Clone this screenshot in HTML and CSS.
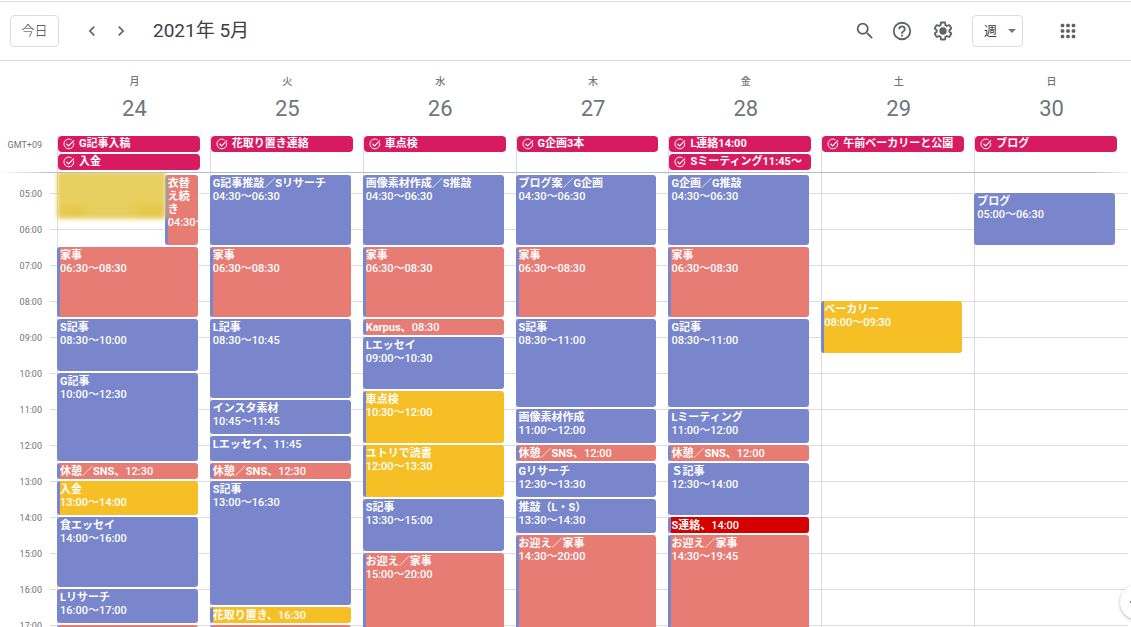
FILE: index.html
```html
<!DOCTYPE html>
<html lang="ja">
<head>
<meta charset="utf-8">
<meta name="viewport" content="width=device-width, initial-scale=1">
<title>2021年 5月</title>
<link rel="stylesheet" href="styles.css">
</head>
<body>
<svg class="sprite" aria-hidden="true">
  <symbol id="task" viewBox="0 0 24 24">
    <path d="M21.2 9.5A9.8 9.8 0 1 1 17 3.6" fill="none" stroke="currentColor" stroke-width="2"/>
    <path d="M7 11.5l4.2 4.2L22 4.6" fill="none" stroke="currentColor" stroke-width="2.2"/>
  </symbol>
</svg>

<header class="toolbar">
  <button class="today" type="button">今日</button>
  <div class="pager">
    <button class="icon-button" type="button" aria-label="前の週"><svg viewBox="0 0 24 24" class="chevron"><path d="M15.4 7.4 14 6l-6 6 6 6 1.4-1.4-4.6-4.6z"/></svg></button>
    <button class="icon-button" type="button" aria-label="次の週"><svg viewBox="0 0 24 24" class="chevron"><path d="M10 6 8.6 7.4l4.6 4.6-4.6 4.6L10 18l6-6z"/></svg></button>
  </div>
  <h1 class="period">2021年 5月</h1>
  <div class="tools">
    <div class="support">
      <button class="icon-button" type="button" aria-label="検索"><svg viewBox="0 0 24 24" class="icon"><path d="M15.5 14h-.79l-.28-.27A6.47 6.47 0 0 0 16 9.5 6.5 6.5 0 1 0 9.5 16c1.61 0 3.09-.59 4.23-1.57l.27.28v.79l5 4.99L20.49 19zm-6 0a4.5 4.5 0 1 1 0-9 4.5 4.5 0 0 1 0 9z"/></svg></button>
      <button class="icon-button" type="button" aria-label="ヘルプ"><svg viewBox="0 0 24 24" class="icon"><path d="M11 18h2v-2h-2zm1-16a10 10 0 1 0 0 20 10 10 0 0 0 0-20zm0 18a8 8 0 1 1 0-16 8 8 0 0 1 0 16zm0-14a4 4 0 0 0-4 4h2a2 2 0 1 1 4 0c0 2-3 1.750-3 5h2c0-2.250 3-2.500 3-5a4 4 0 0 0-4-4z"/></svg></button>
    </div>
    <button class="icon-button" type="button" aria-label="設定"><svg viewBox="0 0 24 24" class="icon"><path d="M13.85 22.250h-3.700c-.74 0-1.360-.54-1.450-1.270l-.27-1.890c-.27-.14-.53-.29-.79-.46l-1.800.72c-.7.26-1.470-.03-1.810-.65L2.200 15.530c-.35-.66-.2-1.440.36-1.880l1.530-1.190c-.01-.15-.02-.3-.02-.46 0-.15.010-.31.020-.46l-1.520-1.190c-.59-.45-.74-1.260-.37-1.880l1.850-3.190c.34-.62 1.110-.9 1.790-.63l1.810.73c.26-.17.52-.32.78-.46l.27-1.910c.09-.7.71-1.250 1.440-1.250h3.700c.74 0 1.360.54 1.450 1.270l.27 1.890c.27.14.53.29.79.46l1.800-.72c.71-.26 1.480.03 1.820.65l1.840 3.180c.36.66.2 1.440-.36 1.880l-1.520 1.190c.1.150.2.300.2.460s-.1.310-.2.460l1.520 1.190c.56.450.72 1.230.370 1.860l-1.860 3.220c-.34.620-1.110.900-1.800.630l-1.800-.72c-.26.170-.52.320-.78.460l-.27 1.910c-.1.680-.72 1.220-1.460 1.220zm-3.230-2h2.760l.37-2.550.53-.22c.44-.18.88-.44 1.340-.78l.45-.34 2.380.96 1.380-2.400-2.030-1.580.07-.56c.03-.26.060-.51.060-.78s-.03-.53-.06-.78l-.07-.56 2.030-1.580-1.390-2.400-2.390.96-.45-.35c-.42-.32-.87-.58-1.330-.77l-.52-.22-.37-2.550h-2.760l-.37 2.550-.53.210c-.44.190-.88.440-1.340.790l-.45.330-2.380-.95-1.390 2.390 2.030 1.580-.07.560a7 7 0 0 0-.06.790c0 .26.020.530.060.780l.07.560-2.030 1.580 1.380 2.400 2.390-.96.450.350c.43.330.860.580 1.330.770l.53.220z"/><circle cx="12" cy="12" r="4"/></svg></button>
    <label class="view">
      <select class="view-select" aria-label="表示形式"><option>週</option><option>月</option><option>日</option></select>
      <svg class="view-arrow" viewBox="0 0 8 4"><path d="M0 0h8L4 4z"/></svg>
    </label>
    <button class="icon-button" type="button" aria-label="アプリ"><svg viewBox="0 0 24 24" class="icon"><g><rect x="4" y="4" width="4" height="4" rx="1.500"/><rect x="10" y="4" width="4" height="4" rx="1.500"/><rect x="16" y="4" width="4" height="4" rx="1.500"/><rect x="4" y="10" width="4" height="4" rx="1.500"/><rect x="10" y="10" width="4" height="4" rx="1.500"/><rect x="16" y="10" width="4" height="4" rx="1.500"/><rect x="4" y="16" width="4" height="4" rx="1.500"/><rect x="10" y="16" width="4" height="4" rx="1.500"/><rect x="16" y="16" width="4" height="4" rx="1.500"/></g></svg></button>
  </div>
</header>

<main class="calendar">
  <div class="week heads">
    <div class="gutter"></div>
    <div class="head"><span class="weekday">月</span><span class="date">24</span></div>
    <div class="head"><span class="weekday">火</span><span class="date">25</span></div>
    <div class="head"><span class="weekday">水</span><span class="date">26</span></div>
    <div class="head"><span class="weekday">木</span><span class="date">27</span></div>
    <div class="head"><span class="weekday">金</span><span class="date">28</span></div>
    <div class="head"><span class="weekday">土</span><span class="date">29</span></div>
    <div class="head"><span class="weekday">日</span><span class="date">30</span></div>
  </div>

  <div class="week all-day">
    <div class="gutter zone">GMT+09</div>
    <div class="tasks">
      <div class="task"><svg class="task-icon"><use href="#task"/></svg>G記事入稿</div>
      <div class="task"><svg class="task-icon"><use href="#task"/></svg>入金</div>
    </div>
    <div class="tasks"><div class="task"><svg class="task-icon"><use href="#task"/></svg>花取り置き連絡</div></div>
    <div class="tasks"><div class="task"><svg class="task-icon"><use href="#task"/></svg>車点検</div></div>
    <div class="tasks"><div class="task"><svg class="task-icon"><use href="#task"/></svg>G企画3本</div></div>
    <div class="tasks">
      <div class="task"><svg class="task-icon"><use href="#task"/></svg>L連絡14:00</div>
      <div class="task"><svg class="task-icon"><use href="#task"/></svg>Sミーティング11:45～</div>
    </div>
    <div class="tasks"><div class="task"><svg class="task-icon"><use href="#task"/></svg>午前ベーカリーと公園</div></div>
    <div class="tasks"><div class="task"><svg class="task-icon"><use href="#task"/></svg>ブログ</div></div>
  </div>
  <div class="divider"></div>

  <div class="scroller">
    <div class="week times">
      <div class="gutter hours">
        <span>05:00</span><span>06:00</span><span>07:00</span><span>08:00</span><span>09:00</span><span>10:00</span><span>11:00</span><span>12:00</span><span>13:00</span><span>14:00</span><span>15:00</span><span>16:00</span><span>17:00</span>
      </div>

      <div class="day split">
        <div class="event masked" style="grid-row: 1 / 6"></div>
        <div class="event home narrow" style="grid-row: 1 / 9"><b>衣替え続き</b><span>04:30～06:30</span></div>
        <div class="event home" style="grid-row: 9 / 17"><b>家事</b><span>06:30～08:30</span></div>
        <div class="event" style="grid-row: 17 / 23"><b>S記事</b><span>08:30～10:00</span></div>
        <div class="event" style="grid-row: 23 / 33"><b>G記事</b><span>10:00～12:30</span></div>
        <div class="event home short" style="grid-row: 33 / 35"><b>休憩／SNS、</b><span>12:30</span></div>
        <div class="event errand" style="grid-row: 35 / 39"><b>入金</b><span>13:00～14:00</span></div>
        <div class="event" style="grid-row: 39 / 47"><b>食エッセイ</b><span>14:00～16:00</span></div>
        <div class="event" style="grid-row: 47 / 51"><b>Lリサーチ</b><span>16:00～17:00</span></div>
        <div class="event home" style="grid-row: 51 / 63"></div>
      </div>

      <div class="day">
        <div class="event" style="grid-row: 1 / 9"><b>G記事推敲／Sリサーチ</b><span>04:30～06:30</span></div>
        <div class="event home" style="grid-row: 9 / 17"><b>家事</b><span>06:30～08:30</span></div>
        <div class="event" style="grid-row: 17 / 26"><b>L記事</b><span>08:30～10:45</span></div>
        <div class="event" style="grid-row: 26 / 30"><b>インスタ素材</b><span>10:45～11:45</span></div>
        <div class="event inline" style="grid-row: 30 / 33"><b>Lエッセイ、</b><span>11:45</span></div>
        <div class="event home short" style="grid-row: 33 / 35"><b>休憩／SNS、</b><span>12:30</span></div>
        <div class="event" style="grid-row: 35 / 49"><b>S記事</b><span>13:00～16:30</span></div>
        <div class="event errand short" style="grid-row: 49 / 51"><b>花取り置き、</b><span>16:30</span></div>
        <div class="event home" style="grid-row: 51 / 63"></div>
      </div>

      <div class="day">
        <div class="event" style="grid-row: 1 / 9"><b>画像素材作成／S推敲</b><span>04:30～06:30</span></div>
        <div class="event home" style="grid-row: 9 / 17"><b>家事</b><span>06:30～08:30</span></div>
        <div class="event home short" style="grid-row: 17 / 19"><b>Karpus、</b><span>08:30</span></div>
        <div class="event" style="grid-row: 19 / 25"><b>Lエッセイ</b><span>09:00～10:30</span></div>
        <div class="event errand" style="grid-row: 25 / 31"><b>車点検</b><span>10:30～12:00</span></div>
        <div class="event errand" style="grid-row: 31 / 37"><b>ユトリで読書</b><span>12:00～13:30</span></div>
        <div class="event" style="grid-row: 37 / 43"><b>S記事</b><span>13:30～15:00</span></div>
        <div class="event home" style="grid-row: 43 / 63"><b>お迎え／家事</b><span>15:00～20:00</span></div>
      </div>

      <div class="day">
        <div class="event" style="grid-row: 1 / 9"><b>ブログ案／G企画</b><span>04:30～06:30</span></div>
        <div class="event home" style="grid-row: 9 / 17"><b>家事</b><span>06:30～08:30</span></div>
        <div class="event" style="grid-row: 17 / 27"><b>S記事</b><span>08:30～11:00</span></div>
        <div class="event" style="grid-row: 27 / 31"><b>画像素材作成</b><span>11:00～12:00</span></div>
        <div class="event home short" style="grid-row: 31 / 33"><b>休憩／SNS、</b><span>12:00</span></div>
        <div class="event" style="grid-row: 33 / 37"><b>Gリサーチ</b><span>12:30～13:30</span></div>
        <div class="event" style="grid-row: 37 / 41"><b>推敲（L・S）</b><span>13:30～14:30</span></div>
        <div class="event home" style="grid-row: 41 / 63"><b>お迎え／家事</b><span>14:30～20:00</span></div>
      </div>

      <div class="day">
        <div class="event" style="grid-row: 1 / 9"><b>G企画／G推敲</b><span>04:30～06:30</span></div>
        <div class="event home" style="grid-row: 9 / 17"><b>家事</b><span>06:30～08:30</span></div>
        <div class="event" style="grid-row: 17 / 27"><b>G記事</b><span>08:30～11:00</span></div>
        <div class="event" style="grid-row: 27 / 31"><b>Lミーティング</b><span>11:00～12:00</span></div>
        <div class="event home short" style="grid-row: 31 / 33"><b>休憩／SNS、</b><span>12:00</span></div>
        <div class="event" style="grid-row: 33 / 39"><b>Ｓ記事</b><span>12:30～14:00</span></div>
        <div class="event urgent short" style="grid-row: 39 / 41"><b>S連絡、</b><span>14:00</span></div>
        <div class="event home" style="grid-row: 41 / 62"><b>お迎え／家事</b><span>14:30～19:45</span></div>
      </div>

      <div class="day">
        <div class="event errand" style="grid-row: 15 / 21"><b>ベーカリー</b><span>08:00～09:30</span></div>
      </div>

      <div class="day">
        <div class="event" style="grid-row: 3 / 9"><b>ブログ</b><span>05:00～06:30</span></div>
      </div>
    </div>
  </div>
</main>

<button class="panel-toggle" type="button" aria-label="サイドパネルを表示"><svg viewBox="0 0 24 24" class="chevron"><path d="M15.4 7.4 14 6l-6 6 6 6 1.400-1.400-4.600-4.600z"/></svg></button>
</body>
</html>
```

FILE: styles.css
```css
:root {
  --line: #dadce0;
  --muted: #70757a;
  --ink: #3c4043;
  --icon: #5f6368;
  --work: #7986cb;
  --home: #e67c73;
  --errand: #f6bf26;
  --urgent: #d50000;
  --task: #d81b60;
  --quarter: 9px;
}

* {
  box-sizing: border-box;
}

body {
  margin: 0;
  padding-top: 1px;
  height: 100vh;
  display: flex;
  flex-direction: column;
  overflow: hidden;
  background: #fff;
  color: var(--ink);
  font-family: Roboto, "Noto Sans CJK JP", sans-serif;
}

button,
select {
  font: inherit;
  color: inherit;
  background: none;
  border: 0;
  margin: 0;
  padding: 0;
}

.sprite {
  position: absolute;
  width: 0;
  height: 0;
}

/* Toolbar */

.toolbar {
  flex: none;
  display: flex;
  align-items: center;
  height: 60px;
  padding: 0 52px 0 10px;
  border-top: 1px solid var(--line);
  border-bottom: 1px solid var(--line);
}

.today {
  width: 49px;
  height: 32px;
  border: 1px solid var(--line);
  border-radius: 4px;
  font-size: 13px;
  font-weight: 300;
  line-height: 28px;
}

.pager {
  display: flex;
  gap: 9px;
  margin-left: 23px;
}

.icon-button {
  display: flex;
}

.chevron {
  width: 20px;
  height: 20px;
  fill: var(--icon);
}

.icon {
  width: 22px;
  height: 22px;
  fill: var(--icon);
}

.period {
  margin: 0 0 0 22px;
  font-size: 19px;
  font-weight: 400;
  line-height: 28px;
}

.tools {
  display: flex;
  align-items: center;
  gap: 18px;
  margin-left: auto;
}

.support {
  display: flex;
  gap: 15px;
  margin-right: 1px;
}

.view {
  position: relative;
  margin-right: 16px;
}

.view-select {
  display: block;
  appearance: none;
  width: 51px;
  height: 32px;
  padding: 0 0 2px 11px;
  border: 1px solid var(--line);
  border-radius: 4px;
  font-size: 13px;
}

.view-arrow {
  position: absolute;
  top: 14px;
  right: 7px;
  width: 8px;
  height: 4px;
  fill: var(--muted);
  pointer-events: none;
}

/* Week layout */

.calendar {
  flex: 1;
  min-height: 0;
  display: flex;
  flex-direction: column;
}

.week {
  display: grid;
  grid-template-columns: 57px repeat(7, minmax(0, 1fr));
  padding-right: 4px;
}

.heads {
  padding-top: 14px;
  padding-bottom: 14px;
  color: var(--muted);
}

.head {
  display: flex;
  flex-direction: column;
  align-items: center;
  gap: 7px;
  padding-left: 2px;
}

.weekday {
  font-size: 10px;
  font-weight: 500;
  line-height: 14px;
}

.date {
  font-size: 22px;
  line-height: 26px;
}

.zone,
.hours {
  padding-right: 15px;
  text-align: right;
  color: var(--muted);
  font-size: 9px;
}

.zone {
  line-height: 18px;
}

.tasks {
  display: flex;
  flex-direction: column;
  gap: 2px;
  min-height: 36px;
  padding-right: 10px;
  border-left: 1px solid var(--line);
}

.task {
  display: flex;
  align-items: center;
  gap: 4px;
  height: 16px;
  padding-left: 5px;
  border-radius: 4px;
  background: var(--task);
  color: #fff;
  font-size: 11px;
  font-weight: 700;
  line-height: 16px;
  white-space: nowrap;
  overflow: hidden;
}

.task-icon {
  flex: none;
  width: 12px;
  height: 12px;
}

.divider {
  flex: none;
  height: 1px;
  background: linear-gradient(to right, transparent, #bbb 56px, #bbb calc(100% - 40px), transparent);
}

/* Time grid */

.scroller {
  flex: 1;
  min-height: 0;
  overflow: hidden;
}

.times {
  background: repeating-linear-gradient(to bottom, var(--line) 0 1px, transparent 1px 36px) 50px 20px / calc(100% - 53px) 100% no-repeat;
}

.hours {
  display: flex;
  flex-direction: column;
  padding-top: 3px;
  line-height: 36px;
}

.day {
  display: grid;
  grid-template-columns: minmax(0, 1fr);
  grid-template-rows: repeat(62, var(--quarter));
  padding: 2px 12px 0 0;
  border-left: 1px solid var(--line);
}

.split {
  grid-template-columns: minmax(0, 107fr) minmax(0, 32fr);
}

.event {
  grid-column: 1 / -1;
  display: flex;
  flex-direction: column;
  margin: 0 0 2px -1px;
  padding: 2px 0 0 3px;
  border-radius: 3px;
  overflow: hidden;
  background: var(--work);
  color: #fff;
  font-size: 11px;
  font-weight: 500;
  line-height: 13px;
  white-space: nowrap;
}

.event b {
  font-weight: 700;
}

.home {
  background: linear-gradient(to right, var(--work) 3px, var(--home) 3px);
}

.errand {
  background: linear-gradient(to right, var(--work) 3px, var(--errand) 3px);
}

.urgent {
  background: linear-gradient(to right, var(--work) 3px, var(--urgent) 3px);
}

.inline,
.short {
  flex-direction: row;
}

.short {
  padding-top: 1px;
  line-height: 16px;
}

.narrow {
  grid-column: 2;
  box-shadow: 0 0 0 1px #fff;
}

.narrow b {
  white-space: normal;
}

.masked {
  grid-column: 1;
  margin: -4px 0 1px -1px;
  background:
    radial-gradient(ellipse at 15% 82%, #e5c545 0, transparent 16%),
    radial-gradient(ellipse at 85% 82%, #e5c545 0, transparent 20%),
    #e8d060;
  filter: blur(2px);
}

/* Side panel */

.panel-toggle {
  position: fixed;
  right: -25px;
  bottom: 7px;
  display: flex;
  align-items: center;
  width: 36px;
  height: 36px;
  padding-left: 3px;
  border-radius: 50%;
  background: #fff;
  box-shadow: 0 1px 3px rgba(60, 64, 67, 0.4);
}
```
